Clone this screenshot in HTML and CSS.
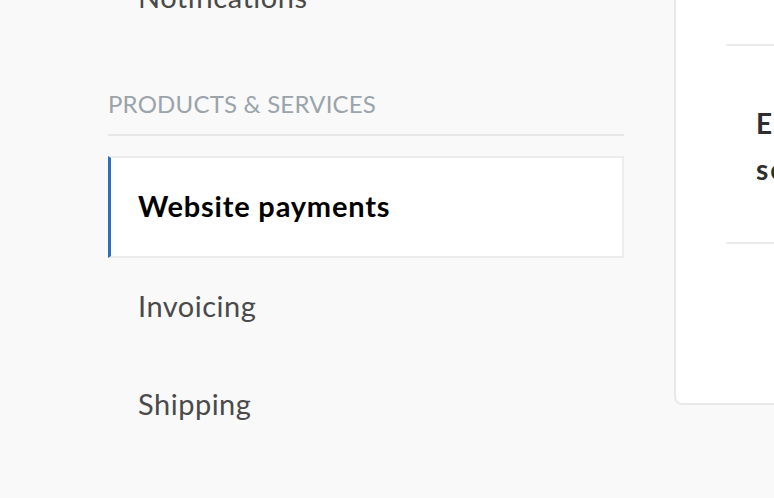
FILE: index.html
```html
<!DOCTYPE html>
<html lang="en">
<head>
<meta charset="utf-8">
<title>Settings</title>
<link rel="stylesheet" href="styles.css">
</head>
<body>
<div class="page">
  <nav class="sidebar">
    <a class="nav-item">Notifications</a>
    <div class="group">
      <h3 class="group-title">PRODUCTS &amp; SERVICES</h3>
      <a class="nav-item active">Website payments</a>
      <a class="nav-item">Invoicing</a>
      <a class="nav-item">Shipping</a>
    </div>
  </nav>
  <section class="card">
    <div class="card-row card-top"></div>
    <div class="card-row card-mid">
      <h2 class="card-title">Enable Express Checkout<br>securely on your site</h2>
    </div>
    <div class="card-row card-bottom"></div>
  </section>
</div>
</body>
</html>
```

FILE: styles.css
```css
html, body {
  margin: 0;
  padding: 0;
  height: 100%;
  overflow: hidden;
}
body {
  background: #f9f9f9;
  font-family: Lato, "Open Sans", sans-serif;
}
.page {
  display: flex;
  align-items: flex-start;
  gap: 50px;
  padding-left: 108px;
}
.sidebar {
  width: 516px;
  flex: none;
  margin-top: -51px;
  display: flex;
  flex-direction: column;
}
.nav-item {
  display: flex;
  align-items: center;
  height: 98px;
  box-sizing: border-box;
  padding-left: 30px;
  padding-bottom: 3px;
  font-size: 29px;
  letter-spacing: 0.5px;
  color: #4a4a4a;
  text-decoration: none;
}
.group {
  margin-top: 42px;
  display: flex;
  flex-direction: column;
}
.group-title {
  margin: 0 0 20px;
  padding-bottom: 15px;
  border-bottom: 2px solid #e7e7e7;
  font-size: 24px;
  line-height: 30px;
  font-weight: 400;
  color: #9aa4aa;
  letter-spacing: 0.2px;
}
.nav-item.active {
  height: 102px;
  background: #fff;
  border: 2px solid #ececec;
  border-left: 3px solid #2b6dbf;
  padding-left: 27px;
  font-weight: 700;
  letter-spacing: 0.8px;
  color: #000;
}
.card {
  flex: none;
  width: 420px;
  margin-top: -20px;
  background: #fff;
  border: 2px solid #e8e8e8;
  border-radius: 0 0 0 8px;
  padding-left: 50px;
  box-sizing: border-box;
}
.card-row {
  border-bottom: 2px solid #eaeaea;
}
.card-top {
  height: 62px;
}
.card-mid {
  height: 198px;
  box-sizing: border-box;
  padding: 54px 0 0 30px;
}
.card-bottom {
  height: 159px;
  border-bottom: none;
}
.card-title {
  margin: 0;
  font-size: 28px;
  line-height: 46px;
  font-weight: 700;
  letter-spacing: 2px;
  color: #2c2e2f;
  white-space: nowrap;
}
```
